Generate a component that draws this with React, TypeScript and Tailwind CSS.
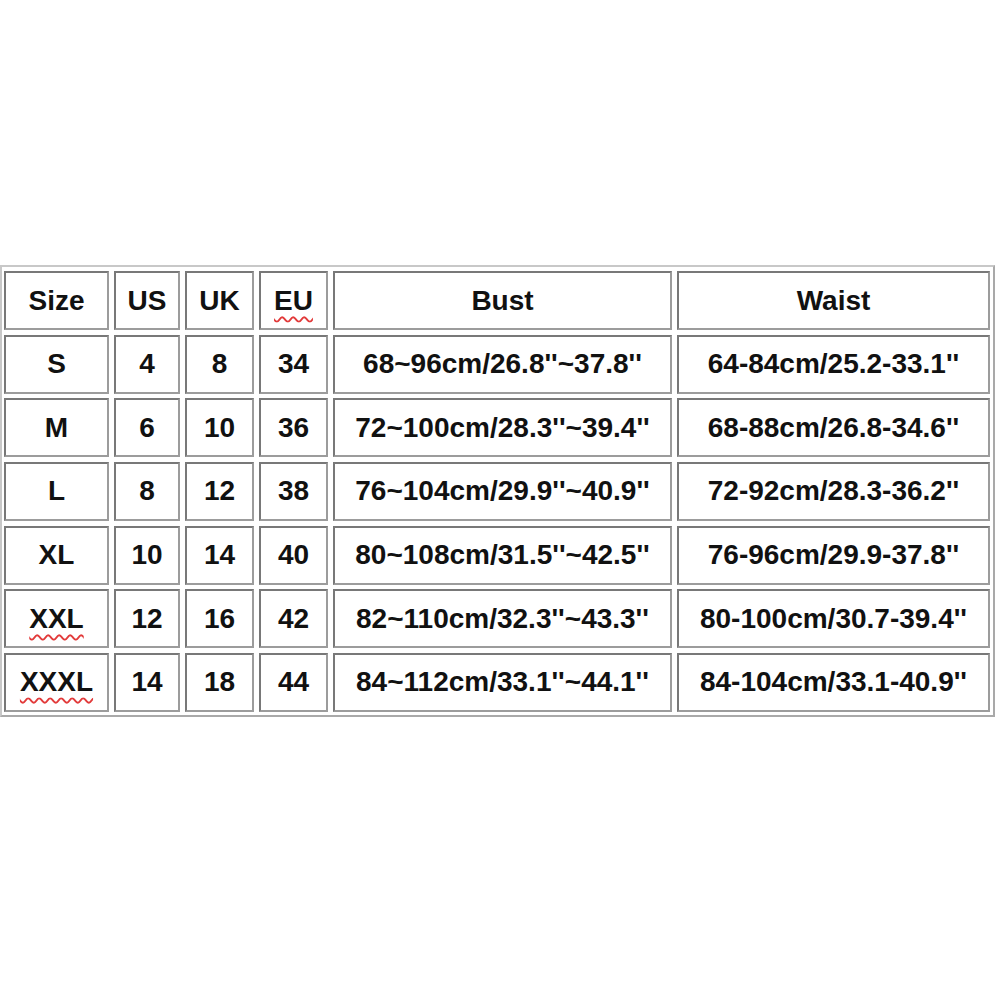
const header = ["Size", "US", "UK", "EU", "Bust", "Waist"];

const rows: string[][] = [
  ["S", "4", "8", "34", "68~96cm/26.8''~37.8''", "64-84cm/25.2-33.1''"],
  ["M", "6", "10", "36", "72~100cm/28.3''~39.4''", "68-88cm/26.8-34.6''"],
  ["L", "8", "12", "38", "76~104cm/29.9''~40.9''", "72-92cm/28.3-36.2''"],
  ["XL", "10", "14", "40", "80~108cm/31.5''~42.5''", "76-96cm/29.9-37.8''"],
  ["XXL", "12", "16", "42", "82~110cm/32.3''~43.3''", "80-100cm/30.7-39.4''"],
  ["XXXL", "14", "18", "44", "84~112cm/33.1''~44.1''", "84-104cm/33.1-40.9''"]
];

// words the spell checker flagged in the original doc
const flagged = new Set(["EU", "XXL", "XXXL"]);

function Cell({ text }: { text: string }) {
  return (
    <div className="flex items-center justify-center border-2 border-t-[#787878] border-l-[#787878] border-r-[#9c9c9c] border-b-[#9c9c9c] bg-white">
      <span
        className={
          flagged.has(text)
            ? "underline decoration-wavy decoration-[#e23a3a] decoration-[1.5px] underline-offset-[6px]"
            : ""
        }
      >
        {text}
      </span>
    </div>
  );
}

export default function App() {
  return (
    <div className="h-[1000px] w-[1000px] overflow-hidden bg-white pt-[265px] font-['Liberation_Sans',Arial,sans-serif] text-[28px] font-bold leading-none text-[#111]">
      <div className="w-[995px] border-2 border-t-[#c8c8c8] border-l-[#c8c8c8] border-r-[#a9a9a9] border-b-[#a9a9a9] pt-[4px] pr-[2px] pb-[3px] pl-[2px]">
        <div className="grid grid-cols-[105px_66px_69px_69px_339px_313px] auto-rows-[59px] gap-x-[5px] gap-y-[4.67px]">
          {header.map((h) => (
            <Cell key={h} text={h} />
          ))}
          {rows.map((r) => r.map((c, i) => <Cell key={r[0] + i} text={c} />))}
        </div>
      </div>
    </div>
  );
}
